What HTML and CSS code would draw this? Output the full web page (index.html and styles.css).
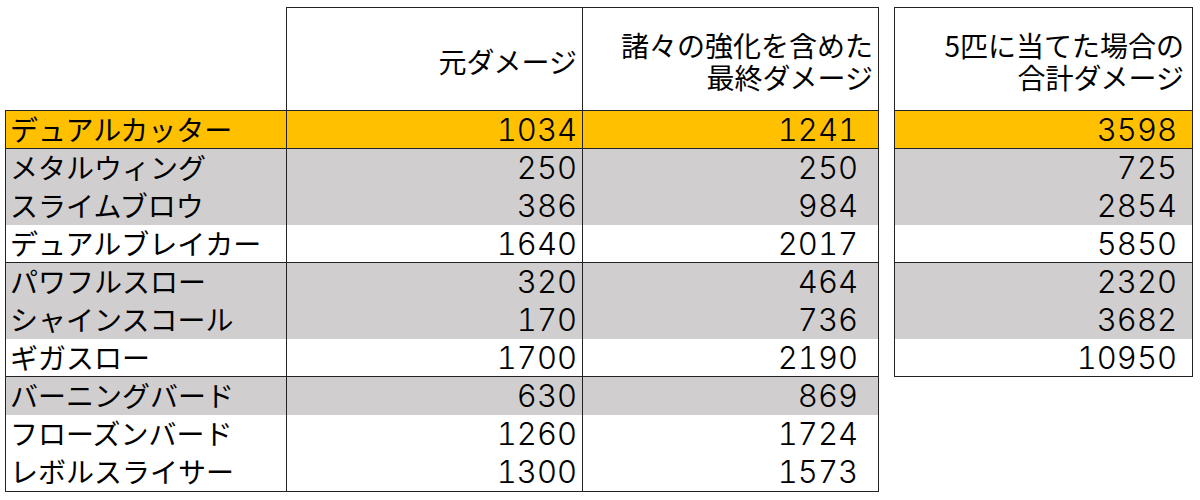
FILE: index.html
```html
<!DOCTYPE html>
<html lang="ja">
<head>
<meta charset="utf-8">
<title>ダメージ表</title>
<link rel="stylesheet" href="styles.css">
</head>
<body>
<div class="sheet">
  <div class="tbl main">
    <div class="c corner"></div>
    <div class="c h h2"><span class="ln">元ダメージ</span></div>
    <div class="c h h3"><span class="ln">諸々の強化を含めた</span><span class="ln">最終ダメージ</span></div>

    <div class="c n y end">デュアルカッター</div>
    <div class="c v v2 y end">1034</div>
    <div class="c v v3 y end">1241</div>

    <div class="c n g">メタルウィング</div>
    <div class="c v v2 g">250</div>
    <div class="c v v3 g">250</div>

    <div class="c n g">スライムブロウ</div>
    <div class="c v v2 g">386</div>
    <div class="c v v3 g">984</div>

    <div class="c n end">デュアルブレイカー</div>
    <div class="c v v2 end">1640</div>
    <div class="c v v3 end">2017</div>

    <div class="c n g">パワフルスロー</div>
    <div class="c v v2 g">320</div>
    <div class="c v v3 g">464</div>

    <div class="c n g">シャインスコール</div>
    <div class="c v v2 g">170</div>
    <div class="c v v3 g">736</div>

    <div class="c n end">ギガスロー</div>
    <div class="c v v2 end">1700</div>
    <div class="c v v3 end">2190</div>

    <div class="c n g">バーニングバード</div>
    <div class="c v v2 g">630</div>
    <div class="c v v3 g">869</div>

    <div class="c n">フローズンバード</div>
    <div class="c v v2">1260</div>
    <div class="c v v3">1724</div>

    <div class="c n end">レボルスライサー</div>
    <div class="c v v2 end">1300</div>
    <div class="c v v3 end">1573</div>
  </div>

  <div class="tbl side">
    <div class="c h hs"><span class="ln">5匹に当てた場合の</span><span class="ln">合計ダメージ</span></div>
    <div class="c v vs y end">3598</div>
    <div class="c v vs g">725</div>
    <div class="c v vs g">2854</div>
    <div class="c v vs end">5850</div>
    <div class="c v vs g">2320</div>
    <div class="c v vs g">3682</div>
    <div class="c v vs end">10950</div>
  </div>
</div>
</body>
</html>
```

FILE: styles.css
```css
html, body {
  margin: 0;
  padding: 0;
  background: #ffffff;
}

body {
  font-family: "Noto Sans CJK JP", sans-serif;
  color: #000000;
}

.sheet {
  display: flex;
  align-items: flex-start;
  gap: 15px;
  padding: 7px 0 0 5px;
}

.tbl {
  display: grid;
}

.main {
  grid-template-columns: 282px 296px 296px;
  grid-template-rows: 104px repeat(9, 38px) 39px;
}

.side {
  grid-template-columns: 298px;
  grid-template-rows: 104px repeat(7, 38px);
  border-left: 1px solid #222;
}

.c {
  box-sizing: border-box;
  border-right: 1px solid #222;
  white-space: nowrap;
}

.corner {
  border-bottom: 1px solid #222;
}

.h {
  border-top: 1px solid #222;
  border-bottom: 1px solid #222;
  display: flex;
  flex-direction: column;
  justify-content: center;
  align-items: flex-end;
  font-size: 28px;
  padding-top: 3px;
}

.ln {
  display: block;
  height: 32px;
  line-height: 32px;
}

.h2 { padding-right: 5px; }
.h3 { padding-right: 5px; }
.hs { padding-right: 8px; }

.n {
  border-left: 1px solid #222;
  font-size: 28px;
  line-height: 37px;
  padding-left: 4px;
}

.v {
  font-family: "Inter", "Noto Sans CJK JP", sans-serif;
  font-weight: 300;
  font-variant-numeric: tabular-nums;
  font-size: 31px;
  line-height: 37px;
  text-align: right;
}

.v2 { padding-right: 5px; }
.v3 { padding-right: 20px; }
.vs { padding-right: 15px; }

.y { background: #ffc000; }
.g { background: #d0cece; }

.end {
  border-bottom: 1px solid #222;
}
```
